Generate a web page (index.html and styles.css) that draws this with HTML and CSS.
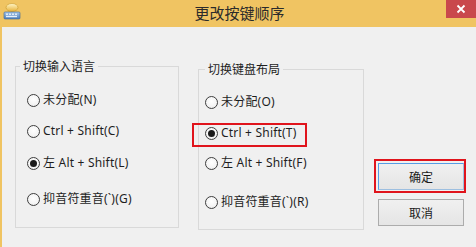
FILE: index.html
```html
<!DOCTYPE html>
<html>
<head>
<meta charset="utf-8">
<link rel="stylesheet" href="styles.css">
</head>
<body>
<div class="window">
  <div class="titlebar">
    <svg class="appicon" width="18" height="18" viewBox="0 0 18 18">
      <defs>
        <linearGradient id="bub" x1="0" y1="0" x2="0" y2="1">
          <stop offset="0" stop-color="#fff6c8"/>
          <stop offset="1" stop-color="#e7b23a"/>
        </linearGradient>
        <linearGradient id="kb" x1="0" y1="0" x2="0" y2="1">
          <stop offset="0" stop-color="#a9c8ea"/>
          <stop offset="1" stop-color="#4f7fb8"/>
        </linearGradient>
      </defs>
      <ellipse cx="9" cy="5.5" rx="6" ry="4" fill="url(#bub)" stroke="#c99a2e" stroke-width="0.6"/>
      <path d="M6 8.5 L5 11 L8.5 9.2 Z" fill="#e7b23a"/>
      <rect x="1" y="10" width="16" height="7" rx="1" fill="url(#kb)" stroke="#3b679c" stroke-width="0.6"/>
      <g fill="#e8f1fb">
        <rect x="3" y="11.5" width="2" height="1.4"/><rect x="6" y="11.5" width="2" height="1.4"/><rect x="9" y="11.5" width="2" height="1.4"/><rect x="12" y="11.5" width="2" height="1.4"/>
        <rect x="3" y="13.8" width="11" height="1.4"/>
      </g>
    </svg>
    <div class="title">更改按键顺序</div>
    <div class="close">
      <svg width="10" height="10" viewBox="0 0 10 10"><path d="M1.5 1.5 L8.5 8.5 M8.5 1.5 L1.5 8.5" stroke="#fff" stroke-width="1.8" fill="none"/></svg>
    </div>
  </div>
  <div class="client">
    <fieldset class="group g1">
      <legend>切换输入语言</legend>
      <div class="row"><span class="radio"></span>未分配(N)</div>
      <div class="row g1r2"><span class="radio"></span>Ctrl + Shift(C)</div>
      <div class="row g1r3"><span class="radio checked"></span>左 Alt + Shift(L)</div>
      <div class="row g1r4"><span class="radio"></span>抑音符重音(`)(G)</div>
    </fieldset>
    <fieldset class="group g2">
      <legend>切换键盘布局</legend>
      <div class="row"><span class="radio"></span>未分配(O)</div>
      <div class="row hlrow"><span class="radio checked"></span>Ctrl + Shift(T)</div>
      <div class="row g2r3"><span class="radio"></span>左 Alt + Shift(F)</div>
      <div class="row g2r4"><span class="radio"></span>抑音符重音(`)(R)</div>
    </fieldset>
    <div class="buttons">
      <div class="hlbtn"><button class="btn default">确定</button></div>
      <button class="btn cancel">取消</button>
    </div>
  </div>
</div>
</body>
</html>
```
FILE: styles.css
```css
html, body {
  margin: 0;
  padding: 0;
}
body {
  width: 476px;
  height: 247px;
  overflow: hidden;
  font-family: "Noto Sans", "Noto Sans CJK SC", sans-serif;
  font-size: 12px;
  color: #1e1e1e;
}
.window {
  width: 476px;
  height: 247px;
  background: #f0c462;
  display: flex;
  flex-direction: column;
}
.titlebar {
  height: 27px;
  display: flex;
  align-items: flex-start;
}
.appicon {
  margin: 2px 0 0 3px;
}
.title {
  flex: 1;
  text-align: center;
  font-family: "Noto Sans CJK SC", sans-serif;
  font-size: 15px;
  line-height: 26px;
  color: #2b2b2b;
  padding-left: 12px;
}
.close {
  width: 30px;
  height: 18px;
  background: #c9484c;
  display: flex;
  align-items: center;
  justify-content: center;
}
.client {
  flex: 1;
  margin-left: 2px;
  background: #f0f0f0;
  display: flex;
  align-items: flex-start;
  padding-left: 13px;
}
.group {
  margin: 0;
  border: 1px solid #d9d9d9;
  box-sizing: border-box;
  padding: 0;
  min-width: 0;
}
.group legend {
  font-family: "Noto Sans CJK SC", sans-serif;
  line-height: 16px;
  height: 16px;
  padding: 0 3px;
}
.g1 {
  width: 164px;
  height: 170px;
  margin-top: 31px;
  padding: 18px 0 0 11px;
}
.g1 legend { margin-left: -7px; }
.g2 {
  width: 166px;
  height: 169px;
  margin-top: 34px;
  margin-left: 19px;
  padding: 17px 0 0 6px;
}
.g2 legend { margin-left: 0px; }
.row {
  display: flex;
  align-items: center;
  height: 16px;
  line-height: 16px;
  white-space: nowrap;
  letter-spacing: 0.2px;
}
.radio {
  width: 11px;
  height: 11px;
  border: 1px solid #3e3e3e;
  border-radius: 50%;
  background: radial-gradient(circle at 50% 40%, #ffffff 0%, #f4f4f4 60%, #dedede 100%);
  margin-right: 3px;
  position: relative;
  flex: none;
}
.radio.checked::after {
  content: "";
  position: absolute;
  left: 2px;
  top: 2px;
  width: 7px;
  height: 7px;
  border-radius: 50%;
  background: #1a1a1a;
}
.g1r2 { margin-top: 15px; }
.g1r3 { margin-top: 16px; }
.g1r4 { margin-top: 20px; }
.hlrow {
  height: 20px;
  align-items: flex-start;
  border: 2px solid #e0141c;
  margin: 13px 0 0 -13px;
  padding-left: 11px;
  width: 100px;
}
.hlrow .radio { margin-top: 2px; }
.g2r3 { margin-top: 8px; }
.g2r4 { margin-top: 23px; }
.buttons {
  margin-top: 132px;
  margin-left: 10px;
  display: flex;
  flex-direction: column;
  align-items: flex-start;
}
.hlbtn {
  border: 2px solid #e0141c;
  padding: 2px 0 1px 2px;
  display: flex;
}
.btn {
  width: 86px;
  height: 27px;
  box-sizing: border-box;
  font-family: "Noto Sans CJK SC", sans-serif;
  font-size: 12px;
  color: #1a1a1a;
  background: linear-gradient(#f0f0f0, #e5e5e5);
  border: 1px solid #acacac;
  padding: 0;
  margin: 0;
}
.btn.default {
  border-color: #569de5;
  border-right-color: #9dbfe0;
  border-bottom-color: #9dbfe0;
}
.btn.cancel {
  margin-top: 6px;
  margin-left: 4px;
}
```
